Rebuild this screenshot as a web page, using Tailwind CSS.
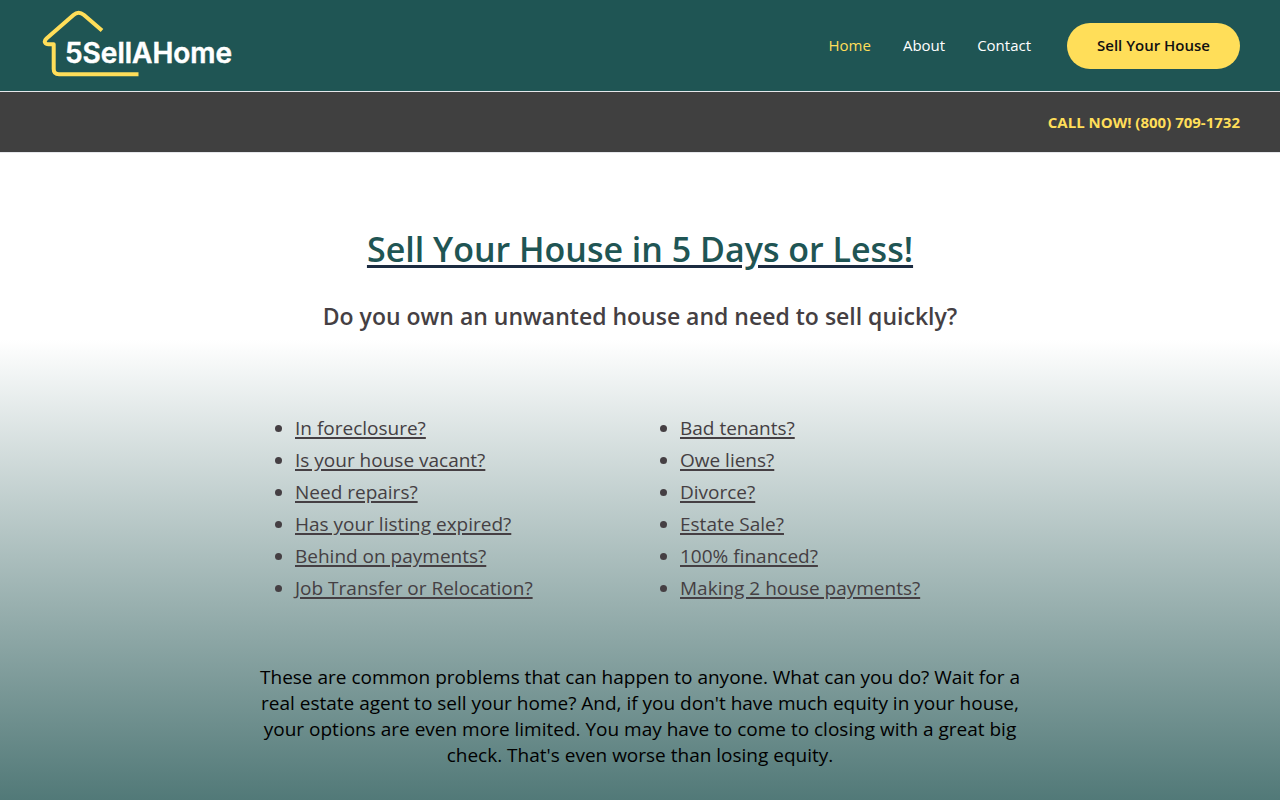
<!DOCTYPE html>
<html lang="en">
<head>
<meta charset="utf-8">
<meta name="viewport" content="width=device-width, initial-scale=1">
<title>5SellAHome</title>
<script src="https://cdn.jsdelivr.net/npm/@tailwindcss/browser@4"></script>
</head>
<body class="flex min-h-screen flex-col bg-white font-['Open_Sans','Noto_Sans',sans-serif] text-[#453f43]">
<header>
  <div class="flex items-center justify-between border-b border-gray-200 bg-[#1f5554] px-10 py-2">
    <a href="#" aria-label="5SellAHome home">
      <svg class="h-[75px] w-[200px]" viewBox="40 8 200 75" role="img" aria-label="5SellAHome">
        <path d="M102 30.500 84 15Q78.500 10.500 73.500 15L46.500 38.500C43 41.800 45.500 44.300 48.500 44.300H53.700V69Q53.700 74.300 59 74.300H138.500" fill="none" stroke="#ffde59" stroke-width="4" stroke-linejoin="round"/>
        <text x="65" y="63" fill="#fff" stroke="#fff" stroke-width="0.500" font-family="Inter, sans-serif" font-size="28" font-weight="600">5SellAHome</text>
      </svg>
    </a>
    <div class="flex items-center gap-9">
      <nav class="flex gap-8 text-[15px] text-white">
        <a href="#" class="text-[#ffde59]">Home</a>
        <a href="#">About</a>
        <a href="#">Contact</a>
      </nav>
      <button type="button" class="h-[46px] rounded-full bg-[#ffde59] px-[30px] text-[15px] font-semibold text-[#111]">Sell Your House</button>
    </div>
  </div>
  <div class="flex h-[61px] items-center justify-end border-b border-gray-200 bg-[#404040] px-10">
    <a href="#" class="text-[15px] font-bold text-[#ffde59]">CALL NOW! (800) 709-1732</a>
  </div>
</header>
<main class="flex-1 bg-linear-to-b from-white from-[187px] to-[#1f5655] to-[779px] px-10 pt-[72px] pb-7">
  <h1 class="text-center text-[34px] leading-[48px] font-semibold"><a href="#" class="text-[#1f5554] underline decoration-[#1b2b40] decoration-3 underline-offset-3">Sell Your House in 5 Days or Less!</a></h1>
  <h2 class="mt-[27px] text-center text-[23px] leading-8 font-semibold">Do you own an unwanted house and need to sell quickly?</h2>
  <div class="mx-auto mt-20 grid max-w-[770px] grid-cols-2 text-[19px] leading-8">
    <ul class="list-disc pl-10 underline decoration-2 underline-offset-2">
      <li>In foreclosure?</li>
      <li>Is your house vacant?</li>
      <li>Need repairs?</li>
      <li>Has your listing expired?</li>
      <li>Behind on payments?</li>
      <li>Job Transfer or Relocation?</li>
    </ul>
    <ul class="list-disc pl-10 underline decoration-2 underline-offset-2">
      <li>Bad tenants?</li>
      <li>Owe liens?</li>
      <li>Divorce?</li>
      <li>Estate Sale?</li>
      <li>100% financed?</li>
      <li>Making 2 house payments?</li>
    </ul>
  </div>
  <p class="mx-auto mt-[60px] max-w-[770px] text-center text-[19px] leading-[26px] text-black">These are common problems that can happen to anyone. What can you do? Wait for a real estate agent to sell your home? And, if you don't have much equity in your house, your options are even more limited. You may have to come to closing with a great big check. That's even worse than losing equity.</p>
</main>
</body>
</html>
